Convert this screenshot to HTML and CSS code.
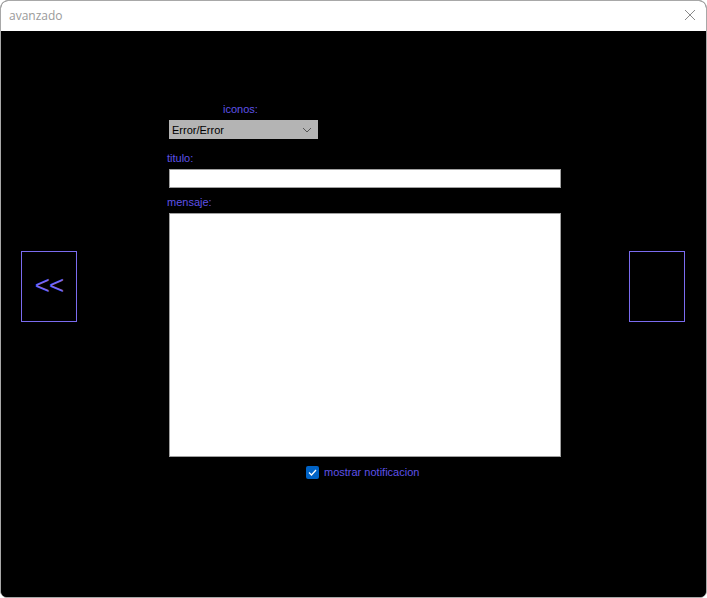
FILE: index.html
```html
<!DOCTYPE html>
<html lang="es">
<head>
<meta charset="utf-8">
<title>avanzado</title>
<link rel="stylesheet" href="styles.css">
</head>
<body>
<div class="window">
  <div class="titlebar">
    <span class="title">avanzado</span>
    <svg class="close" width="12" height="12" viewBox="0 0 12 12"><path d="M1 1 L11 11 M11 1 L1 11" stroke="#8a8a8a" stroke-width="1" fill="none"/></svg>
  </div>
  <div class="content">
    <div class="side left">
      <button class="navbtn">&lt;&lt;</button>
    </div>
    <div class="form">
      <div class="label iconos">iconos:</div>
      <div class="select">
        <span>Error/Error</span>
        <svg width="10" height="6" viewBox="0 0 10 6"><path d="M1 1 L5 5 L9 1" stroke="#555" stroke-width="1" fill="none"/></svg>
      </div>
      <div class="label titulo">titulo:</div>
      <div class="textbox"></div>
      <div class="label mensaje">mensaje:</div>
      <div class="textarea"></div>
      <div class="check-row">
        <span class="checkbox"><svg width="9" height="7" viewBox="0 0 9 7"><path d="M1 3.5 L3.5 6 L8 1" stroke="#fff" stroke-width="1.3" fill="none"/></svg></span>
        <span class="check-label">mostrar notificacion</span>
      </div>
    </div>
    <div class="side right">
      <button class="navbtn"></button>
    </div>
  </div>
</div>
</body>
</html>
```
FILE: styles.css
```css
html, body {
  margin: 0;
  padding: 0;
  background: #ffffff;
}
.window {
  width: 707px;
  height: 598px;
  box-sizing: border-box;
  border: 1px solid #a8a8a8;
  border-radius: 8px 8px 7px 7px;
  overflow: hidden;
  background: #000;
  display: flex;
  flex-direction: column;
}
.titlebar {
  height: 30px;
  background: #fff;
  display: flex;
  align-items: center;
  justify-content: space-between;
  padding: 0 10px 0 8px;
  flex-shrink: 0;
}
.title {
  font-family: "Open Sans", "Noto Sans", sans-serif;
  font-size: 12px;
  color: #9a9a9a;
  margin-top: -1px;
}
.close {
  margin-top: -2px;
}
.content {
  flex: 1;
  display: flex;
  align-items: flex-start;
  background: #000;
}
.side.left {
  padding-left: 20px;
  padding-top: 220px;
}
.side.right {
  padding-left: 68px;
  padding-top: 220px;
}
.navbtn {
  width: 56px;
  height: 71px;
  box-sizing: border-box;
  background: #000;
  border: 1px solid #7b6cf0;
  color: #7566f4;
  font-family: "Liberation Sans", Arial, sans-serif;
  font-size: 26px;
  padding: 0 0 3px 0;
  margin: 0;
  display: flex;
  align-items: center;
  justify-content: center;
  letter-spacing: -1px;
}
.form {
  margin-left: 90px;
  width: 394px;
  padding-top: 72px;
  display: flex;
  flex-direction: column;
  font-family: "Liberation Sans", Arial, sans-serif;
  font-size: 11px;
}
.label {
  color: #5e52e8;
  line-height: 13px;
  height: 13px;
}
.iconos {
  margin-left: 56px;
}
.titulo {
  margin-top: 13px;
}
.mensaje {
  margin-top: 8px;
}
.select {
  margin-top: 4px;
  margin-left: 2px;
  width: 149px;
  height: 19px;
  box-sizing: border-box;
  background: #b4b4b4;
  display: flex;
  align-items: center;
  justify-content: space-between;
  padding: 0 6px 0 3px;
  color: #000;
  font-size: 11px;
}
.textbox {
  margin-top: 4px;
  margin-left: 2px;
  width: 392px;
  height: 19px;
  box-sizing: border-box;
  background: #fff;
  border: 1px solid #a0a0a0;
}
.textarea {
  margin-top: 4px;
  margin-left: 2px;
  width: 392px;
  height: 244px;
  box-sizing: border-box;
  background: #fff;
  border: 1px solid #a0a0a0;
}
.check-row {
  margin-top: 9px;
  margin-left: 139px;
  display: flex;
  align-items: center;
  height: 13px;
}
.checkbox {
  width: 13px;
  height: 13px;
  border-radius: 2px;
  background: #0063c6;
  display: flex;
  align-items: center;
  justify-content: center;
}
.check-label {
  margin-left: 5px;
  color: #5e52e8;
  line-height: 13px;
}
```
